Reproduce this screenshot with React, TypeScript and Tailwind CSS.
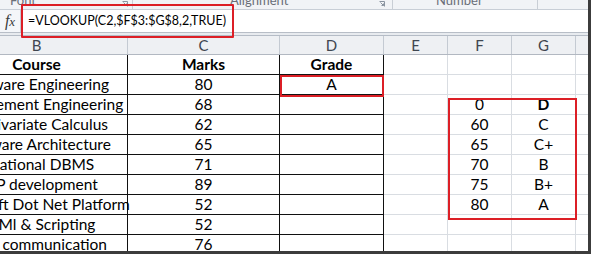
import React from "react";

const cols = [
  { key: "B", w: 182 },
  { key: "C", w: 152 },
  { key: "D", w: 104 },
  { key: "E", w: 64 },
  { key: "F", w: 64 },
  { key: "G", w: 64 },
  { key: "H", w: 40 },
];

const rows: string[][] = [
  ["Course", "Marks", "Grade", "", "", ""],
  ["Software Engineering", "80", "A", "", "", ""],
  ["Management Engineering", "68", "", "", "0", "D"],
  ["Multivariate Calculus", "62", "", "", "60", "C"],
  ["Software Architecture", "65", "", "", "65", "C+"],
  ["Relational DBMS", "71", "", "", "70", "B"],
  ["PHP development", "89", "", "", "75", "B+"],
  ["Microsoft Dot Net Platform", "52", "", "", "80", "A"],
  ["HTMl & Scripting", "52", "", "", "", ""],
  ["Data communication", "76", "", "", "", ""],
];

function Launcher() {
  return (
    <svg width="6" height="6" viewBox="0 0 6 6" className="shrink-0">
      <path d="M0.5 0.5h5v5" fill="none" stroke="#8a94a0" strokeWidth="1" />
      <path d="M1.5 1.5l3 3M2.5 4.5h2v-2" fill="none" stroke="#8a94a0" strokeWidth="1" />
    </svg>
  );
}

export default function App() {
  return (
    <div className="relative w-[593px] h-[254px] bg-white overflow-hidden font-['Lato',sans-serif]">
      <div className="w-[591px] h-[254px] border-r-[3px] border-b-[3px] border-[#3c3c3c] overflow-hidden flex flex-col bg-white">
        {/* Ribbon group labels (cut off) */}
        <div className="h-[10px] shrink-0 bg-[#f1f3f6] flex items-start text-[13px] text-[#6a6f78] overflow-hidden border-b border-[#c8ced6]">
          <div className="w-[133px] shrink-0 flex items-start border-r border-[#c9ced5] h-full">
            <span className="pl-[10px] -mt-[9px] leading-[18px]">Font</span>
            <div className="ml-auto mr-[4px] mt-[1px]">
              <Launcher />
            </div>
          </div>
          <div className="w-[260px] shrink-0 flex items-start border-r border-[#c9ced5] h-full">
            <span className="pl-[97px] -mt-[9px] leading-[18px]">Alignment</span>
            <div className="ml-auto mr-[7px] mt-[1px]">
              <Launcher />
            </div>
          </div>
          <div className="w-[145px] shrink-0 flex items-start border-r border-[#c9ced5] h-full">
            <span className="pl-[43px] -mt-[9px] leading-[18px]">Number</span>
          </div>
        </div>

        {/* Formula bar */}
        <div className="h-[23px] shrink-0 flex bg-white border-b border-[#b8bec7]">
          <div className="w-[21px] shrink-0 flex items-center justify-center border-r border-[#c6ccd4] bg-[#f4f6f9]">
            <span className="font-['Liberation_Serif',serif] italic text-[16px] text-[#3b3b3b] leading-none">
              f<span className="text-[13px]">x</span>
            </span>
          </div>
          <div className="flex-1 flex items-center pl-[7px] text-[12.5px] text-black leading-none">
            =VLOOKUP(C2,$F$3:$G$8,2,TRUE)
          </div>
        </div>
        <div className="h-[3px] shrink-0 bg-[#e8ebef] border-b border-[#b5bcc6]" />

        {/* Column headers */}
        <div className="h-[19px] shrink-0 flex -ml-[54px] bg-[#eef0f3] border-b border-[#b2b8c1]">
          {cols.map((c) => (
            <div
              key={c.key}
              style={{ width: c.w }}
              className="shrink-0 flex items-center justify-center border-r border-[#c4cad2] text-[15px] text-[#3f4650]"
            >
              {c.key === "H" ? "" : c.key}
            </div>
          ))}
        </div>

        {/* Cells */}
        <div className="flex flex-col -ml-[54px]">
          {rows.map((r, i) => (
            <div key={i} className="h-[20px] shrink-0 flex text-[15.5px] text-black">
              {cols.map((c, j) => {
                const table = j <= 2;
                const txt = j < 6 ? r[j] : "";
                const bold = i === 0 || (j === 5 && txt === "D");
                return (
                  <div
                    key={c.key}
                    style={{ width: c.w }}
                    className={
                      "shrink-0 flex items-center justify-center whitespace-nowrap overflow-visible border-r border-b " +
                      (table ? "border-[#111]" : "border-[#d9dde2]") +
                      (bold ? " font-bold" : "")
                    }
                  >
                    {txt}
                  </div>
                );
              })}
            </div>
          ))}
        </div>
      </div>

      {/* Highlight boxes */}
      <div className="absolute left-[21px] top-[4px] w-[213px] h-[34px] border-2 border-[#dc1f26] rounded-[1px]" />
      <div className="absolute left-[280px] top-[75px] w-[104px] h-[22px] border-2 border-[#dc1f26]" />
      <div className="absolute left-[448px] top-[98px] w-[129px] h-[122px] border-2 border-[#dc1f26]" />
    </div>
  );
}
